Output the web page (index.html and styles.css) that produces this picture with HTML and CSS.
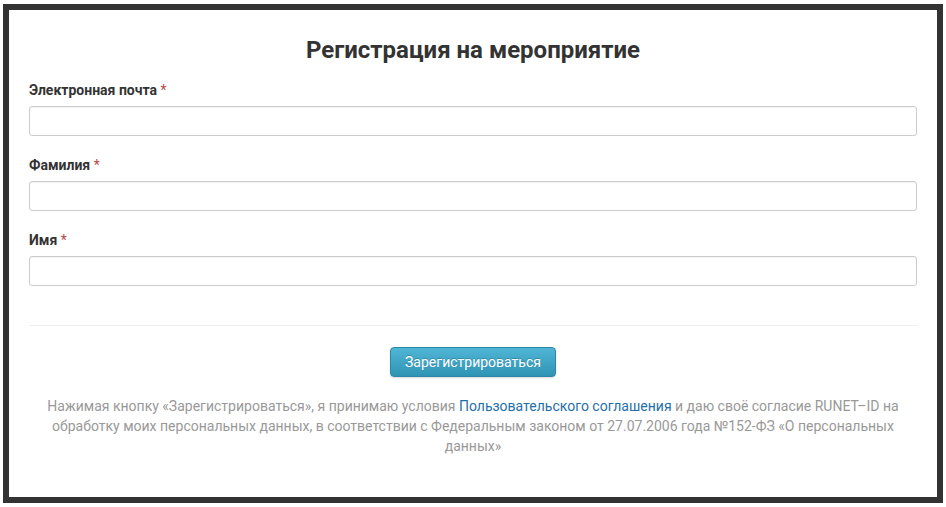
FILE: index.html
```html
<!DOCTYPE html>
<html lang="ru">
<head>
  <meta charset="UTF-8" />
  <title>Регистрация на мероприятие</title>
  <link rel="stylesheet" href="styles.css">
</head>
<body>

  <div class="frame">
    <h1>Регистрация на мероприятие</h1>
    <form id="regForm">
      <div class="group">
        <label for="email">Электронная почта <span class="req">*</span></label>
        <input type="text" id="email" />
      </div>
      <div class="group">
        <label for="lastname">Фамилия <span class="req">*</span></label>
        <input type="text" id="lastname" />
      </div>
      <div class="group">
        <label for="firstname">Имя <span class="req">*</span></label>
        <input type="text" id="firstname" />
      </div>

      <hr />

      <div class="actions">
        <button type="submit">Зарегистрироваться</button>
      </div>

      <p class="terms">
        Нажимая кнопку «Зарегистрироваться», я принимаю условия <a href="#">Пользовательского соглашения</a> и даю своё согласие RUNET–ID на обработку моих персональных данных, в соответствии с Федеральным законом от 27.07.2006 года №152-ФЗ «О персональных данных»
      </p>
    </form>
  </div>

</body>
</html>
```

FILE: styles.css
```css
/* Page */
body {
  margin: 0;
  background-color: #ffffff;
  font-family: Roboto, "Liberation Sans", sans-serif;
  color: #333;
}

/* Dark frame */
.frame {
  box-sizing: border-box;
  margin: 4px 3px 0 3px;
  height: 499px;
  border: 6px solid #333;
  padding: 27px 20px 0 20px;
  background-color: #fff;
}

h1 {
  margin: 0 0 17px 0;
  font-size: 24px;
  line-height: 26px;
  font-weight: 700;
  text-align: center;
  color: #333;
}

.group {
  margin-bottom: 19px;
}

label {
  display: block;
  font-size: 14px;
  line-height: 20px;
  font-weight: 700;
  margin-bottom: 6px;
  color: #333;
}

.req {
  color: #b94a48;
  font-weight: 400;
}

input[type="text"] {
  display: block;
  box-sizing: border-box;
  width: 100%;
  height: 30px;
  padding: 4px 8px;
  border: 1px solid #ccc;
  border-radius: 3px;
  font-size: 14px;
  box-shadow: inset 0 1px 1px rgba(0, 0, 0, 0.05);
}

hr {
  margin: 39px 0 21px 0;
  border: none;
  border-top: 1px solid #eee;
}

.actions {
  text-align: center;
}

button {
  background-image: linear-gradient(#51b6d5, #2f93b3);
  border: 1px solid #2b88a8;
  border-radius: 4px;
  color: white;
  font-family: Roboto, "Liberation Sans", sans-serif;
  font-size: 14px;
  line-height: 20px;
  padding: 4px 14px;
  text-shadow: 0 -1px 0 rgba(0, 0, 0, 0.2);
  box-shadow: 0 1px 2px rgba(0, 0, 0, 0.15);
  cursor: pointer;
}

.terms {
  margin: 19px 0 0 0;
  font-size: 14px;
  line-height: 20px;
  text-align: center;
  color: #999;
}

.terms a {
  color: #1f6fa8;
  text-decoration: none;
}
```
